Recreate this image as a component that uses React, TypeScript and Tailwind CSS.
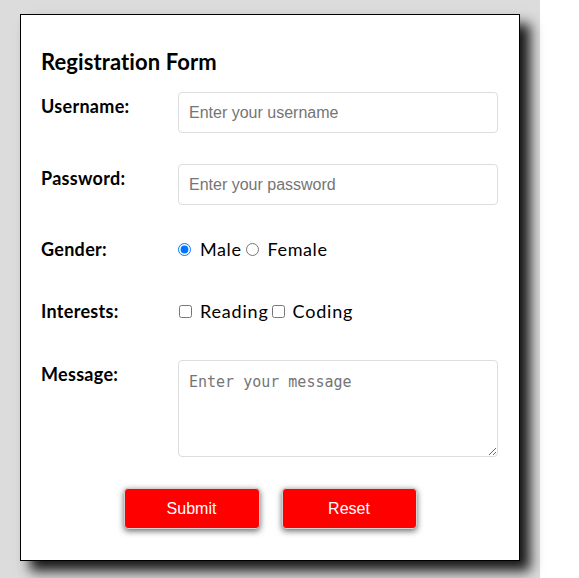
export default function App() {
  const label = "w-[137px] shrink-0 text-[18px] tracking-[0.3px] font-bold text-black";
  const field =
    "w-[320px] h-[41px] rounded-[4px] border border-[#dddddd] px-[10px] text-[16px] font-['Liberation_Sans',Arial,sans-serif] placeholder:text-[#757575] outline-none";
  const button =
    "h-[41px] rounded-[4px] border border-[#d0d0d0] bg-[#ff0000] text-white text-[16px] font-['Liberation_Sans',Arial,sans-serif] shadow-[0_2px_6px_rgba(0,0,0,0.6)]";

  return (
    <div className="w-[540px] min-h-[578px] bg-[#dcdcdc] pt-[14px] pl-[20px] font-['Lato',sans-serif]">
      <form className="w-[500px] h-[547px] border border-black bg-white px-[20px] pt-[32px] shadow-[10px_10px_12px_rgba(0,0,0,0.9)]">
        <h2 className="text-[22px] font-bold text-black leading-[30px] tracking-[0.1px]">Registration Form</h2>

        {/* Username */}
        <div className="mt-[15px] flex items-start">
          <label className={`${label} pt-[1px]`}>Username:</label>
          <input type="text" placeholder="Enter your username" className={field} />
        </div>

        {/* Password */}
        <div className="mt-[31px] flex items-start">
          <label className={`${label} pt-[1px]`}>Password:</label>
          <input type="password" placeholder="Enter your password" className={field} />
        </div>

        {/* Gender */}
        <div className="mt-[32px] flex items-center h-[24px]">
          <label className={label}>Gender:</label>
          <div className="flex items-center text-[18px] tracking-[0.6px] text-black">
            <input type="radio" name="gender" defaultChecked className="w-[13px] h-[13px] mr-[9px]" />
            <span>Male</span>
            <input type="radio" name="gender" className="w-[13px] h-[13px] ml-[4px] mr-[9px]" />
            <span>Female</span>
          </div>
        </div>

        {/* Interests */}
        <div className="mt-[38px] flex items-center h-[24px]">
          <label className={label}>Interests:</label>
          <div className="flex items-center text-[18px] tracking-[0.8px] text-black">
            <input type="checkbox" className="w-[13px] h-[13px] ml-[1px] mr-[8px]" />
            <span>Reading</span>
            <input type="checkbox" className="w-[13px] h-[13px] ml-[3px] mr-[8px]" />
            <span>Coding</span>
          </div>
        </div>

        {/* Message */}
        <div className="mt-[37px] flex items-start">
          <label className={`${label} pt-[1px]`}>Message:</label>
          <textarea
            placeholder="Enter your message"
            className="w-[320px] h-[97px] rounded-[4px] border border-[#dddddd] px-[10px] py-[10px] text-[15px] font-['DejaVu_Sans_Mono',monospace] placeholder:text-[#757575] outline-none resize"
          />
        </div>

        <div className="mt-[31px] flex justify-center gap-[22px]">
          <button type="submit" className={`${button} w-[136px]`}>
            Submit
          </button>
          <button type="reset" className={`${button} w-[135px]`}>
            Reset
          </button>
        </div>
      </form>
    </div>
  );
}
